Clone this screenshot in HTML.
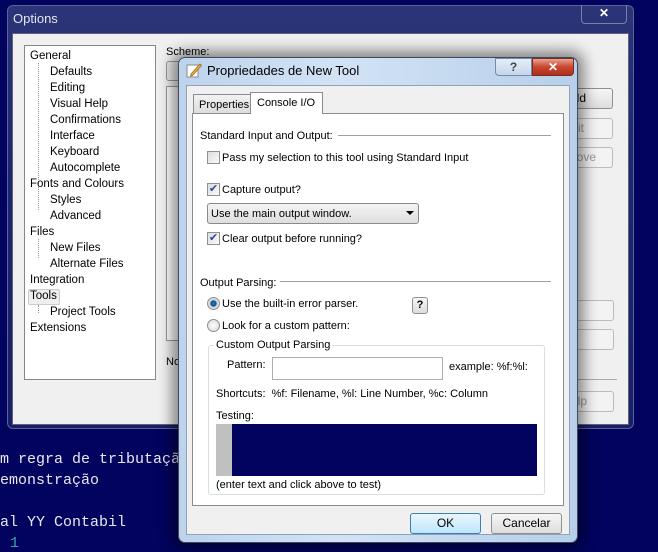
<!DOCTYPE html>
<html><head><meta charset="utf-8"><style>
*{margin:0;padding:0;box-sizing:border-box}
body{width:658px;height:552px;overflow:hidden;background:#02035e;font-family:"Liberation Sans",sans-serif;font-size:11px;color:#000;position:relative}
.a{position:absolute}
.mono{font-family:"Liberation Mono",monospace;font-size:15px;color:#e8e8f0;white-space:pre}
.btn{position:absolute;border:1px solid #8e8f8f;border-radius:3px;background:linear-gradient(#f6f6f6,#dddddd);text-align:center;line-height:19px;font-size:12px}
.cb{position:absolute;width:13px;height:13px;border:1px solid #8f8f8f;background:linear-gradient(135deg,#dcdcdc,#fafafa)}
.rd{position:absolute;width:13px;height:13px;border:1px solid #8f8f8f;border-radius:50%;background:radial-gradient(#fff,#d6d6d6)}
.t{position:absolute;white-space:nowrap;margin-top:1px}
.tree .t{font-size:11.5px}
</style></head><body>
<div class="mono a" style="left:0;top:451px">m regra de tributaçã</div>
<div class="mono a" style="left:0;top:472px">emonstração</div>
<div class="mono a" style="left:0;top:514px">al YY Contabil</div>
<div class="mono a" style="left:10px;top:535px;color:#3aa6a0">1</div>

<div class="a" style="left:7px;top:5px;width:627px;height:424px;background:linear-gradient(#2b3577,#1d2670 40%,#181f66);border:1px solid #5a6296;border-radius:6px"></div>
<div class="t" style="left:13px;top:10px;color:#e6e6f0;font-size:13px">Options</div>
<div class="a" style="left:581px;top:5px;width:46px;height:19px;border:1px solid #7880aa;border-top:none;border-radius:0 0 4px 4px;color:#fff;text-align:center;font-weight:bold;font-size:12px;line-height:17px">✕</div>
<div class="a" style="left:12px;top:33px;width:617px;height:392px;background:#f0f0f0;border:1px solid #5d6280"></div>
<div class="a tree" style="left:24px;top:45px;width:132px;height:335px;background:#fff;border:1px solid #828790">
 <div class="t" style="left:5px;top:3px">General</div>
 <div class="a" style="left:13px;top:17px;height:147px;border-left:1px dotted #999"></div>
 <div class="t" style="left:25px;top:19px">Defaults</div>
 <div class="t" style="left:25px;top:35px">Editing</div>
 <div class="t" style="left:25px;top:51px">Visual Help</div>
 <div class="t" style="left:25px;top:67px">Confirmations</div>
 <div class="t" style="left:25px;top:83px">Interface</div>
 <div class="t" style="left:25px;top:99px">Keyboard</div>
 <div class="t" style="left:25px;top:115px">Autocomplete</div>
 <div class="t" style="left:5px;top:131px">Fonts and Colours</div>
 <div class="a" style="left:13px;top:145px;height:19px;border-left:1px dotted #999"></div>
 <div class="t" style="left:25px;top:147px">Styles</div>
 <div class="t" style="left:25px;top:163px">Advanced</div>
 <div class="t" style="left:5px;top:179px">Files</div>
 <div class="a" style="left:13px;top:193px;height:19px;border-left:1px dotted #999"></div>
 <div class="t" style="left:25px;top:195px">New Files</div>
 <div class="t" style="left:25px;top:211px">Alternate Files</div>
 <div class="t" style="left:5px;top:227px">Integration</div>
 <div class="a" style="left:3px;top:243px;width:32px;height:16px;border:1px solid #ccc;border-radius:2px;background:#eee"></div>
 <div class="t" style="left:5px;top:243px">Tools</div>
 <div class="a" style="left:13px;top:259px;height:8px;border-left:1px dotted #999"></div>
 <div class="t" style="left:25px;top:259px">Project Tools</div>
 <div class="t" style="left:5px;top:275px">Extensions</div>
</div>
<div class="t" style="left:166px;top:45px">Scheme:</div>
<div class="a" style="left:166px;top:61px;width:30px;height:20px;border:1px solid #999;border-radius:3px;background:#eaeaea"></div>
<div class="a" style="left:166px;top:86px;width:20px;height:255px;border:1px solid #999;background:#fff"></div>
<div class="t" style="left:166px;top:355px">No</div>
<div class="btn" style="left:555px;top:88px;width:58px;height:21px;color:#000;text-align:right;padding-right:26px">dd</div>
<div class="btn" style="left:555px;top:118px;width:58px;height:21px;color:#999;text-align:right;padding-right:28px;background:#f3f3f3;border-color:#bbb">lit</div>
<div class="btn" style="left:555px;top:147px;width:58px;height:21px;color:#999;text-align:right;padding-right:16px;background:#f3f3f3;border-color:#bbb">ove</div>
<div class="btn" style="left:555px;top:300px;width:59px;height:21px;background:#f3f3f3;border-color:#bbb"></div>
<div class="btn" style="left:555px;top:329px;width:59px;height:21px;background:#f3f3f3;border-color:#bbb"></div>
<div class="a" style="left:560px;top:379px;width:57px;border-top:1px solid #aaa"></div>
<div class="btn" style="left:555px;top:391px;width:59px;height:21px;color:#999;text-align:right;padding-right:26px;background:#f3f3f3;border-color:#bbb">elp</div>

<div class="a" style="left:178px;top:57px;width:400px;height:486px;border-radius:7px;box-shadow:0 0 14px 6px rgba(0,0,0,.45)"></div>
<div class="a" style="left:178px;top:57px;width:400px;height:486px;border:1px solid #3d4a60;border-radius:7px;background:linear-gradient(90deg,#bdd3ec,#d2e3f5 40%,#b7cfe9);"></div>
<svg class="a" style="left:186px;top:62px" width="16" height="16"><rect x="1" y="3" width="11" height="12" fill="#fff" stroke="#8a8a8a"/><path d="M5 12 L14 2 L15.5 3.5 L6.5 13.5 L4.5 14 Z" fill="#f2b640" stroke="#9a6a10" stroke-width=".8"/></svg>
<div class="t" style="left:207px;top:62px;font-size:13px">Propriedades de New Tool</div>
<div class="a" style="left:495px;top:58px;width:37px;height:18px;border:1px solid #7b8aa3;border-radius:0 0 0 4px;background:linear-gradient(#e4eef9,#c5d6ea);text-align:center;font-weight:bold;color:#444;line-height:16px;font-size:12px">?</div>
<div class="a" style="left:532px;top:58px;width:42px;height:18px;border:1px solid #7a2c20;border-radius:0 0 4px 0;background:linear-gradient(#e8a493,#c8452e 50%,#b0301c);text-align:center;font-weight:bold;color:#fff;font-size:12px;line-height:16px">✕</div>
<div class="a" style="left:186px;top:85px;width:384px;height:450px;background:#f0f0f0;border:1px solid #8fa2b8"></div>
<div class="a" style="left:193px;top:94px;width:58px;height:20px;border:1px solid #898c95;border-bottom:none;background:linear-gradient(#f2f2f2,#dcdcdc)"></div>
<div class="t" style="left:199px;top:98px">Properties</div>
<div class="a" style="left:192px;top:113px;width:372px;height:393px;background:#fff;border:1px solid #898c95"></div>
<div class="a" style="left:250px;top:92px;width:73px;height:22px;border:1px solid #898c95;border-bottom:none;background:#fff"></div>
<div class="t" style="left:257px;top:96px">Console I/O</div>

<div class="t" style="left:200px;top:129px">Standard Input and Output:</div>
<div class="a" style="left:338px;top:135px;width:213px;border-top:1px solid #a0a0a0"></div>
<div class="cb" style="left:207px;top:151px"></div>
<div class="t" style="left:222px;top:151px">Pass my selection to this tool using Standard Input</div>
<div class="cb" style="left:207px;top:183px;color:#2a4a9a;font-size:11px;line-height:11px;text-align:center">✔</div>
<div class="t" style="left:222px;top:183px">Capture output?</div>
<div class="a" style="left:207px;top:203px;width:212px;height:21px;border:1px solid #8a8a8a;border-radius:3px;background:linear-gradient(#f4f4f4,#dedede)"></div>
<div class="t" style="left:211px;top:207px">Use the main output window.</div>
<div class="a" style="left:406px;top:211px;width:0;height:0;border-left:4px solid transparent;border-right:4px solid transparent;border-top:4px solid #000"></div>
<div class="cb" style="left:207px;top:232px;color:#2a4a9a;font-size:11px;line-height:11px;text-align:center">✔</div>
<div class="t" style="left:222px;top:232px">Clear output before running?</div>
<div class="t" style="left:200px;top:276px">Output Parsing:</div>
<div class="a" style="left:280px;top:281px;width:271px;border-top:1px solid #a0a0a0"></div>
<div class="rd" style="left:207px;top:297px;background:radial-gradient(#1c7fd0 0,#0d4f94 35%,#d0d0d0 45%,#f4f4f4)"></div>
<div class="t" style="left:222px;top:297px">Use the built-in error parser.</div>
<div class="btn" style="left:412px;top:297px;width:16px;height:17px;line-height:15px;font-size:11px;font-weight:bold">?</div>
<div class="rd" style="left:207px;top:319px"></div>
<div class="t" style="left:222px;top:319px">Look for a custom pattern:</div>
<div class="a" style="left:208px;top:345px;width:337px;height:150px;border:1px solid #d5dfe5;border-radius:3px"></div>
<div class="t" style="left:214px;top:338px;background:#fff;padding:0 2px">Custom Output Parsing</div>
<div class="t" style="left:227px;top:358px">Pattern:</div>
<div class="a" style="left:272px;top:357px;width:171px;height:23px;border:1px solid #abadb3;background:#fff"></div>
<div class="t" style="left:449px;top:360px">example: %f:%l:</div>
<div class="t" style="left:216px;top:387px">Shortcuts:&nbsp; %f: Filename, %l: Line Number, %c: Column</div>
<div class="t" style="left:216px;top:409px">Testing:</div>
<div class="a" style="left:216px;top:424px;width:321px;height:52px;background:#02035e"></div>
<div class="a" style="left:216px;top:424px;width:16px;height:52px;background:#c0c0c0"></div>
<div class="t" style="left:216px;top:478px">(enter text and click above to test)</div>
<div class="btn" style="left:410px;top:513px;width:71px;height:21px;border-color:#3c7fb1;background:linear-gradient(#eaf6fd,#bee6fd)">OK</div>
<div class="btn" style="left:491px;top:513px;width:71px;height:21px">Cancelar</div>
</body></html>
